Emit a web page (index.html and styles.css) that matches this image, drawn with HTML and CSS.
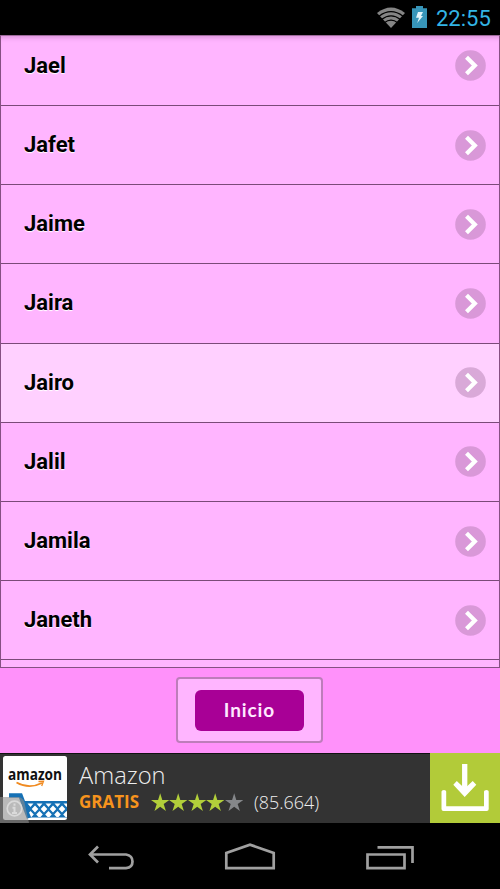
FILE: index.html
```
<!DOCTYPE html>
<html lang="es">
<head>
<meta charset="utf-8">
<title>Nombres</title>
<link rel="stylesheet" href="styles.css">
</head>
<body>
<svg width="0" height="0" class="defs">
  <symbol id="chevron" viewBox="0 0 31 31">
    <circle cx="15.5" cy="15.5" r="15.3" fill="#a06f9e" fill-opacity=".4"/>
    <path d="M11.5 7.3 19.8 15.5 11.5 23.7" fill="none" stroke="#fff" stroke-width="4.2"/>
  </symbol>
  <symbol id="star" viewBox="0 0 20 20">
    <path d="M10 0 12.300 7.200H20L13.800 11.700 16.200 19.200 10 14.700 3.800 19.200 6.200 11.700 0 7.200H7.700Z"/>
  </symbol>
</svg>
<header class="status">
  <svg class="wifi" width="28" height="22" viewBox="0 0 28 22">
    <path d="M0 6Q14-5 28 6L14 21Z" fill="#858585"/>
    <path d="M2 9.2Q14 .2 26 9.2M4.5 12.5Q14 5.2 23.500 12.5M7.3 15.700Q14 10.500 20.700 15.700" fill="none" stroke="#000" stroke-width="1.3"/>
  </svg>
  <svg class="battery" width="15" height="22" viewBox="0 0 15 22">
    <path d="M0 2.2H4V0H11V2.2H15V22H0Z" fill="#3795b9"/>
    <path d="M6 6H11L9 10H11L5.2 17 7 11.8H4Z" fill="#e4f5fb"/>
  </svg>
  <time>22:55</time>
</header>
<main class="viewport">
  <ul class="names">
    <li><span>Jael</span><svg><use href="#chevron"/></svg></li>
    <li><span>Jafet</span><svg><use href="#chevron"/></svg></li>
    <li><span>Jaime</span><svg><use href="#chevron"/></svg></li>
    <li><span>Jaira</span><svg><use href="#chevron"/></svg></li>
    <li class="active"><span>Jairo</span><svg><use href="#chevron"/></svg></li>
    <li><span>Jalil</span><svg><use href="#chevron"/></svg></li>
    <li><span>Jamila</span><svg><use href="#chevron"/></svg></li>
    <li><span>Janeth</span><svg><use href="#chevron"/></svg></li>
  </ul>
</main>
<footer class="toolbar">
  <div class="frame"><button class="home">Inicio</button></div>
</footer>
<section class="ad">
  <svg class="logo" width="64" height="64" viewBox="0 0 64 64">
    <defs>
      <clipPath id="basket"><path d="M22 47H64V61H28Z"/></clipPath>
    </defs>
    <rect width="64" height="64" rx="2.500" fill="#fff"/>
    <text x="5" y="23.500" textLength="54" lengthAdjust="spacingAndGlyphs" class="brand">amazon</text>
    <path d="M13.5 26.5Q26 33.500 39 27" fill="none" stroke="#f08a20" stroke-width="1.600"/>
    <path d="M35.5 25.5 40.5 25.3 38.700 30" fill="none" stroke="#f08a20" stroke-width="1.300"/>
    <path d="M6 39.500H17.500L26 62" fill="none" stroke="#1671b5" stroke-width="4.5"/>
    <path d="M19 45H64V61.500H26Z" fill="#1671b5"/>
    <g clip-path="url(#basket)" fill="#fff">
      <path d="M24.500 47.500h6l-3 3.500zM33.500 47.500h6l-3 3.500zM42.500 47.500h6l-3 3.500zM51.500 47.500h6l-3 3.500zM60.500 47.500h6l-3 3.500z"/>
      <path d="M32 49.500l3.300 3.500-3.300 3.500-3.300-3.500zM41 49.500l3.300 3.500-3.300 3.500-3.300-3.500zM50 49.500l3.300 3.500-3.300 3.500-3.300-3.500zM59 49.500l3.300 3.500-3.300 3.500-3.300-3.500z"/>
      <path d="M27.500 55l3.300 3.500-3.300 3.500-3.300-3.500zM36.500 55l3.300 3.500-3.300 3.500-3.300-3.500zM45.500 55l3.300 3.500-3.300 3.500-3.300-3.500zM54.500 55l3.300 3.500-3.300 3.500-3.300-3.500zM63.500 55l3.300 3.500-3.300 3.500-3.300-3.500z"/>
    </g>
  </svg>
  <svg class="info" width="29" height="26" viewBox="0 0 29 26">
    <path d="M0 0H19Q24 1 25 8L29 26H0Z" fill="#8c8c8c" fill-opacity=".6"/>
    <circle cx="14.500" cy="11.500" r="7.300" fill="none" stroke="#dadada" stroke-width="1.700"/>
    <path d="M14.500 6.500V8.800M12.500 10.700H14.500V16M12 16H17" fill="none" stroke="#dadada" stroke-width="2"/>
  </svg>
  <div class="copy">
    <div class="title">Amazon</div>
    <div class="meta">
      <b>GRATIS</b>
      <span class="stars"><svg><use href="#star"/></svg><svg><use href="#star"/></svg><svg><use href="#star"/></svg><svg><use href="#star"/></svg><svg class="off"><use href="#star"/></svg></span>
      <span class="count">(85.664)</span>
    </div>
  </div>
  <div class="download">
    <svg width="70" height="70" viewBox="0 0 70 70">
      <path d="M34.700 11V38" stroke="#fff" stroke-width="5.300"/>
      <path d="M23.300 31.700 26.800 28 34.700 35.500 42.700 28 46.300 31.700 34.700 44Z" fill="#fff"/>
      <path d="M11.500 38.500Q11.500 37 14 37 16.200 37 16.200 38.500V53.200H54V38.500Q54 37 56.500 37 58.700 37 58.700 38.500V56Q58.700 58 56.700 58H13.500Q11.500 58 11.500 56Z" fill="#fff"/>
    </svg>
  </div>
</section>
<nav class="keys">
  <svg width="500" height="66" viewBox="0 823 500 66" fill="none" stroke="#a0a0a0" stroke-width="2.700">
    <path d="M90 854.500H126Q132.500 855.500 132.500 861.500 132.500 867.500 126 868.200H109M98 846.500 90 854.500 98 862.500"/>
    <path d="M226.300 868.200V853L250 844.700 273.700 853V868.200Z"/>
    <path d="M367.500 854.500H404.500V868.200H367.500ZM377.500 847.300H412.500V863"/>
  </svg>
</nav>
</body>
</html>
```

FILE: styles.css
```
* { box-sizing: border-box; }
body {
  margin: 0;
  width: 500px;
  height: 889px;
  overflow: hidden;
  display: flex;
  flex-direction: column;
  background: #000;
  font-family: Roboto, "Liberation Sans", sans-serif;
}
svg { display: block; flex: none; }
.defs { position: absolute; }
.status {
  height: 35px;
  flex: none;
  display: flex;
  align-items: flex-start;
  padding: 6px 8px 0 0;
  justify-content: flex-end;
}
.wifi { margin: 1px 7px 0 0; }
.battery { margin-right: 9px; }
.status time {
  color: #33b5e5;
  font-size: 22px;
  line-height: 26px;
  width: 56px;
  white-space: nowrap;
}
.viewport {
  height: 633px;
  flex: none;
  overflow: hidden;
  background: #ffb5ff;
  border: 1px solid #865083;
  border-top-color: #9d6a9b;
  box-shadow: inset 0 5px 4px -3px #a060a060;
}
.names {
  list-style: none;
  margin: -9.200px 0 0;
  padding: 0;
}
.names li {
  height: 79.200px;
  display: flex;
  align-items: center;
  justify-content: space-between;
  padding: 0 13px 0 23px;
  border-bottom: 1px solid #7b4a79;
}
.names .active { background: #ffd0ff; }
.names span {
  font-size: 22px;
  font-weight: 700;
  line-height: 26px;
  color: #000;
  text-shadow: 0 1px 1px #fff;
}
.names svg { width: 31px; height: 31px; }
.toolbar {
  height: 85px;
  flex: none;
  background: #ff91fa;
  display: flex;
  justify-content: center;
  align-items: flex-start;
  padding: 9px 1px 0 0;
}
.frame {
  width: 147px;
  height: 66px;
  border: 2px solid #bd7dba;
  border-radius: 4px;
  background: #ffb5ff;
  display: grid;
  place-items: center;
}
.home {
  width: 109px;
  height: 41px;
  padding: 0 0 2px;
  border: 0;
  border-radius: 6px;
  background: #a80096;
  color: #ffe8ff;
  font: 700 19px Lato, sans-serif;
  letter-spacing: .9px;
}
.ad {
  height: 70px;
  flex: none;
  position: relative;
  display: flex;
  background: #333;
  border-top: 1px solid #111;
  color: #eee;
  font-family: "Open Sans", sans-serif;
}
.logo { margin: 2px 0 0 3px; }
.brand { font: 700 16px "Open Sans", sans-serif; fill: #111; }
.info { position: absolute; left: 0; top: 43px; }
.copy { flex: 1; padding: 5px 0 0 12px; }
.title { font-size: 23.700px; line-height: 32px; font-weight: 300; }
.meta { display: flex; align-items: center; height: 22px; line-height: 22px; }
.meta b { width: 72px; color: #f7941d; font-size: 17px; font-weight: 700; }
.stars { display: flex; width: 103px; }
.stars svg { width: 18.400px; height: 19px; fill: #b2cf3a; }
.stars .off { fill: #85878a; }
.count { font-size: 17.900px; font-weight: 300; }
.download { width: 70px; margin-top: -1px; height: 70px; background: #b2cb39; }
.keys { height: 66px; flex: none; }
```
